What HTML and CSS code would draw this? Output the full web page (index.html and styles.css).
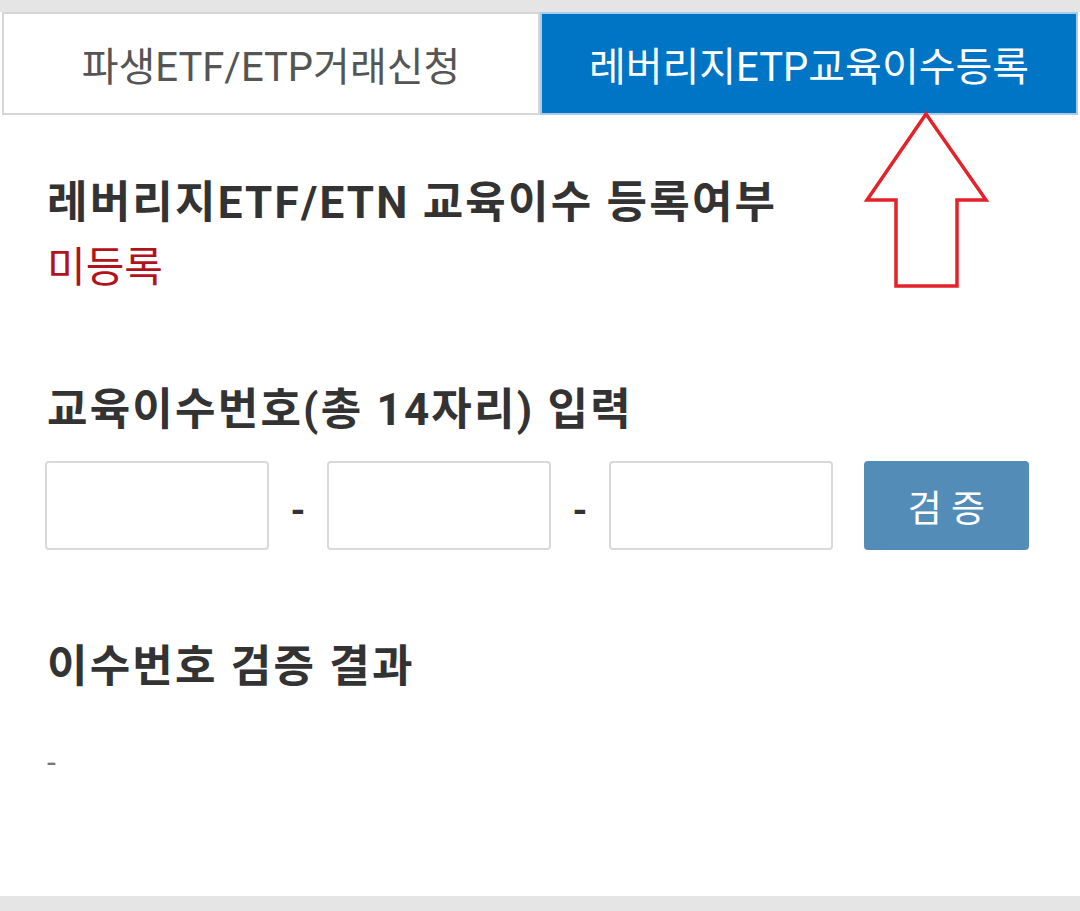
FILE: index.html
```html
<!DOCTYPE html>
<html lang="ko">
<head>
    <meta charset="UTF-8">
    <meta name="viewport" content="width=device-width, initial-scale=1.0">
    <title>레버리지ETP교육이수등록</title>
    <link rel="stylesheet" href="styles.css">
</head>
<body>
    <div class="page">
        <div class="top-bar"></div>

        <div class="tabs">
            <a class="tab" href="#">파생ETF/ETP거래신청</a>
            <a class="tab active" href="#">레버리지ETP교육이수등록</a>
        </div>

        <div class="content">
            <!-- annotation arrow pointing at the active tab -->
            <svg class="arrow" width="130" height="180" viewBox="0 0 130 180">
                <polygon points="64,3 124,89 95,89 95,175 34,175 34,89 5,89"
                         fill="none" stroke="#e3222a" stroke-width="3.5" stroke-linejoin="miter"/>
            </svg>

            <h2 class="title">레버리지ETF/ETN 교육이수 등록여부</h2>
            <p class="status">미등록</p>

            <h2 class="title number-title">교육이수번호(총 14자리) 입력</h2>
            <div class="number-row">
                <input class="num-input" type="text">
                <span class="dash">-</span>
                <input class="num-input" type="text">
                <span class="dash">-</span>
                <input class="num-input" type="text">
                <button class="verify-btn">검 증</button>
            </div>

            <h2 class="title result-title">이수번호 검증 결과</h2>
            <p class="result">-</p>
        </div>

        <div class="bottom-bar"></div>
    </div>
</body>
</html>
```

FILE: styles.css
```css
* {
    margin: 0;
    padding: 0;
    box-sizing: border-box;
}

body {
    font-family: Roboto, "Noto Sans CJK KR", sans-serif;
    background-color: #fff;
    color: #333;
}

.page {
    height: 911px;
    display: flex;
    flex-direction: column;
}

.top-bar {
    height: 12px;
    background-color: #e5e5e5;
}

.tabs {
    display: flex;
    padding: 0 2px;
}

.tab {
    flex: 1;
    height: 103px;
    display: flex;
    justify-content: center;
    align-items: center;
    text-decoration: none;
    font-size: 40px;
    color: #555;
    background-color: #fff;
    border: 2px solid #d6d6d6;
}

.tab.active {
    color: #fff;
    background-color: #0075c6;
    border-color: #a9cde8;
}

.content {
    position: relative;
    padding: 0 47px;
}

.arrow {
    position: absolute;
    top: -4px;
    left: 862px;
}

.title {
    font-size: 44px;
    font-weight: bold;
    color: #333;
    line-height: 52px;
    letter-spacing: 2.2px;
    margin-top: 62px;
}

.status {
    font-size: 42px;
    color: #b2121a;
    line-height: 52px;
    margin-top: 13px;
}

.number-title {
    margin-top: 90px;
}

.number-row {
    display: flex;
    align-items: center;
    margin-top: 25px;
    margin-left: -2px;
}

.num-input {
    width: 224px;
    height: 89px;
    border: 2px solid #d9d9d9;
    border-radius: 4px;
    background: #fff;
}

.dash {
    width: 58px;
    text-align: center;
    font-size: 38px;
    font-weight: bold;
    color: #333;
    padding-top: 10px;
}

.verify-btn {
    width: 165px;
    height: 89px;
    margin-left: 31px;
    border: none;
    border-radius: 4px;
    background-color: #538cb6;
    color: #fff;
    font-family: inherit;
    font-size: 37px;
}

.result-title {
    margin-top: 91px;
}

.result {
    font-size: 32px;
    color: #777;
    line-height: 40px;
    margin-top: 49px;
}

.bottom-bar {
    margin-top: auto;
    height: 15px;
    background-color: #e5e5e5;
}
```
